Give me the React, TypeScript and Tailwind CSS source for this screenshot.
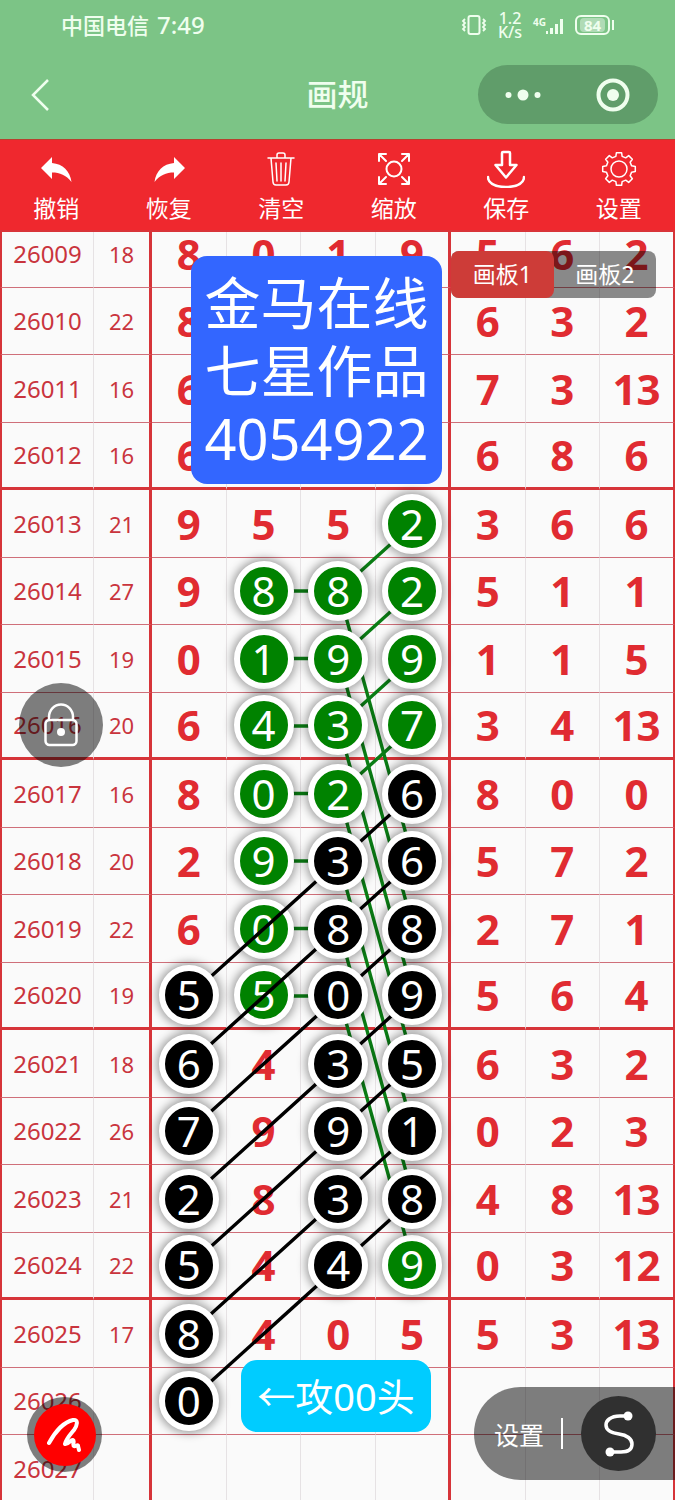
import React, { useState } from 'react';

type Mark = 'green' | 'black';
type Cell = { value: string; mark?: Mark };
type Row = { issue: string; sum: string; cells: Cell[] };
type Point = [col: number, row: number];

// "g" after a digit is a green ball, "b" a black one, "-" an empty cell
const parse = (issue: string, sum: string, line: string): Row => ({
  issue,
  sum,
  cells: line.split(' ').map((item) => {
    const value = item.replace(/[gb-]/g, '');
    if (item.endsWith('g')) return { value, mark: 'green' };
    if (item.endsWith('b')) return { value, mark: 'black' };
    return { value };
  }),
});

const rows: Row[] = [
  parse('26009', '18', '8 0 1 9 5 6 2'),
  parse('26010', '22', '8 - - - 6 3 2'),
  parse('26011', '16', '6 - - - 7 3 13'),
  parse('26012', '16', '6 - - - 6 8 6'),
  parse('26013', '21', '9 5 5 2g 3 6 6'),
  parse('26014', '27', '9 8g 8g 2g 5 1 1'),
  parse('26015', '19', '0 1g 9g 9g 1 1 5'),
  parse('26016', '20', '6 4g 3g 7g 3 4 13'),
  parse('26017', '16', '8 0g 2g 6b 8 0 0'),
  parse('26018', '20', '2 9g 3b 6b 5 7 2'),
  parse('26019', '22', '6 0g 8b 8b 2 7 1'),
  parse('26020', '19', '5b 5g 0b 9b 5 6 4'),
  parse('26021', '18', '6b 4 3b 5b 6 3 2'),
  parse('26022', '26', '7b 9 9b 1b 0 2 3'),
  parse('26023', '21', '2b 8 3b 8b 4 8 13'),
  parse('26024', '22', '5b 4 4b 9g 0 3 12'),
  parse('26025', '17', '8b 4 0 5 5 3 13'),
  parse('26026', '', '0b - - - - - -'),
  parse('26027', '', '- - - - - - -'),
];

const range = (from: number, to: number) => Array.from({ length: to - from + 1 }, (_, i) => from + i);

const greenLines: Point[][] = [
  ...range(5, 11).map((r): Point[] => [[1, r], [2, r]]),
  ...range(4, 7).map((r): Point[] => [[3, r], [2, r + 1]]),
  ...range(5, 11).map((r): Point[] => [[2, r], [3, r + 4]]),
];

const blackLines: Point[][] = range(8, 14).map((r): Point[] => [[3, r], [2, r + 1], [0, r + 3]]);

const toXY = ([col, row]: Point) => `${152 + (523 / 7) * (col + 0.5)},${row * 67.5 + 33.5}`;

const Lines = ({ lines, className }: { lines: Point[][]; className: string }) => (
  <svg
    viewBox="0 0 675 1283"
    preserveAspectRatio="none"
    aria-hidden="true"
    className={`pointer-events-none absolute inset-0 h-full w-full fill-none ${className}`}
  >
    {lines.map((line, i) => (
      <polyline key={i} points={line.map(toXY).join(' ')} strokeWidth="3.4" vectorEffect="non-scaling-stroke" />
    ))}
  </svg>
);

const Ball = ({ value, mark }: { value: string; mark: Mark }) => (
  <span
    className={`relative mx-auto grid size-15 place-items-center rounded-full border-6 border-white text-[42px] leading-none font-normal text-white shadow-[0_0_10px_2px_rgba(0,0,0,0.4)] ${
      mark === 'green' ? 'z-10 bg-[#008200]' : 'z-30 bg-black'
    }`}
  >
    {value}
  </span>
);

const gearPath = () => {
  const points: string[] = [];
  for (let i = 0; i < 8; i++) {
    [[-14, 13], [-9, 16.5], [9, 16.5], [14, 13]].forEach(([deg, r]) => {
      const a = ((i * 45 + deg) * Math.PI) / 180;
      points.push(`${(18 + r * Math.sin(a)).toFixed(2)} ${(18 - r * Math.cos(a)).toFixed(2)}`);
    });
  }
  return `M${points.join('L')}Z`;
};

const tools = [
  {
    label: '撤销',
    icon: <path d="M3 17 14 6v6c11 1 18 8 19.500 19C28 24 22 21.500 14 21.500V28Z" fill="currentColor" stroke="none" />,
  },
  {
    label: '恢复',
    icon: <path d="M34 17 23 6v6C12 13 5 20 3.500 31 9 24 15 21.500 23 21.500V28Z" fill="currentColor" stroke="none" />,
  },
  {
    label: '清空',
    icon: (
      <g strokeWidth="1.500">
        <path d="M5 7h26M14 7V4q0-2 2-2h4q2 0 2 2v3M8 7l2 24q.2 3 3 3h10q2.800 0 3-3l2-24" />
        <path d="m13 12 1 18M18 12v18M23 12l-1 18" />
      </g>
    ),
  },
  {
    label: '缩放',
    icon: (
      <g strokeWidth="2">
        <circle cx="18" cy="18" r="7.500" />
        <path d="M3 10V3h7M3 3l7 7M26 3h7v7M33 3l-7 7M3 26v7h7M3 33l7-7M26 33h7v-7M33 33l-7-7" />
      </g>
    ),
  },
  {
    label: '保存',
    icon: (
      <g strokeWidth="2.500">
        <path d="M15 1h6q1 0 1 1v12h6.500L18 26.500 7.500 14H14V2q0-1 1-1Z" />
        <path d="M0 26c0 5 5 10 18 10s18-5 18-10" />
      </g>
    ),
  },
  {
    label: '设置',
    icon: (
      <g strokeWidth="1.500">
        <path d={gearPath()} />
        <circle cx="18" cy="18" r="8" />
      </g>
    ),
  },
];

const StatusBar = () => (
  <div className="flex h-[50px] items-center justify-between px-[61px] font-medium">
    <div className="flex items-center gap-2 text-[22px]">
      <span>中国电信</span>
      <span className="text-2xl">7:49</span>
    </div>
    <div className="flex items-center gap-[11px]">
      <svg viewBox="0 0 26 22" className="h-[22px] w-[26px] fill-none stroke-current stroke-2" aria-hidden="true">
        <rect x="7.500" y="2" width="11" height="18" rx="2" />
        <path d="m4 5-2 2 2 2-2 2 2 2-2 2 2 2M22 5l2 2-2 2 2 2-2 2 2 2-2 2" strokeWidth="1.800" />
      </svg>
      <span className="flex flex-col items-center text-base leading-[14px]">
        <span>1.2</span>
        <span>K/s</span>
      </span>
      <span className="flex">
        <span className="text-[10px] leading-[14px] font-bold">4G</span>
        <svg viewBox="0 0 18 20" className="h-5 w-[18px] fill-current" aria-hidden="true">
          <path d="M0 16h2v3H0zM4 13h3v6H4zM9 9h3v10H9zM14 4h3v15h-3z" />
        </svg>
      </span>
      <span className="flex items-center gap-[2px]">
        <span className="grid h-5 w-[35px] place-items-center rounded-md border-2 border-current">
          <span className="rounded-sm bg-white/40 px-1 text-[15px] leading-[14px] font-bold">84</span>
        </span>
        <span className="h-[10px] w-[2px] bg-current" />
      </span>
    </div>
  </div>
);

const App: React.FC = () => {
  const [board, setBoard] = useState(0);

  return (
    <div className="flex h-screen flex-col overflow-hidden bg-[#fafafa] font-['Noto_Sans','Noto_Sans_CJK_SC',sans-serif]">
      <header className="shrink-0 bg-[#7cc486] text-[#effeee]">
        <StatusBar />
        <div className="grid h-[89px] grid-cols-[1fr_auto_1fr] items-center px-[17px]">
          <button type="button" aria-label="返回" className="ml-[13px] w-5">
            <svg viewBox="0 0 20 32" className="h-8 w-5 fill-none stroke-current stroke-[2.500]">
              <path d="M18 1 3 16l15 15" />
            </svg>
          </button>
          <h1 className="text-[31px] font-medium">画规</h1>
          <div className="grid h-[59px] w-[180px] grid-cols-2 place-items-center justify-self-end rounded-full bg-[#609d6a]">
            <button type="button" aria-label="更多">
              <svg viewBox="0 0 38 12" className="h-3 w-[38px] fill-current">
                <circle cx="4.500" cy="6" r="3" />
                <circle cx="19" cy="6" r="5.500" />
                <circle cx="33.500" cy="6" r="3" />
              </svg>
            </button>
            <button type="button" aria-label="关闭">
              <svg viewBox="0 0 34 34" className="size-[34px] fill-none stroke-current">
                <circle cx="17" cy="17" r="14.500" strokeWidth="4" />
                <circle cx="17" cy="17" r="6" fill="currentColor" stroke="none" />
              </svg>
            </button>
          </div>
        </div>
      </header>

      <nav className="grid h-[91px] shrink-0 grid-cols-6 border-t border-[#b8402f] bg-[#ef282e] text-white">
        {tools.map((tool) => (
          <button key={tool.label} type="button" className="flex flex-col items-center pt-[10px] text-[23px] leading-8">
            <svg
              viewBox="-1 -1 38 38"
              className="mb-1 size-[38px] fill-none stroke-current"
              strokeLinejoin="round"
              strokeLinecap="round"
              aria-hidden="true"
            >
              {tool.icon}
            </svg>
            {tool.label}
          </button>
        ))}
      </nav>

      <main className="relative min-h-0 flex-1 overflow-hidden border-t-2 border-[#d93439]">
        {/* Trend chart, scrolled a little past the first row */}
        <div className="relative isolate -mt-3">
          <table className="w-full table-fixed border-separate border-spacing-0 text-center">
            <colgroup>
              <col className="w-[94px]" />
              <col className="w-[58px]" />
              <col span={7} />
            </colgroup>
            <tbody>
              {rows.map((row, r) => {
                const line = r % 4 === 3 ? 'border-b-3 border-b-[#d63439]' : 'border-b border-b-[#cf6f79]';
                return (
                  <tr key={row.issue} className="h-[67px] odd:h-[68px]">
                    <th
                      scope="row"
                      className={`border-r border-l-2 border-r-[#e6e2e4] border-l-[#d63439] p-0 text-2xl leading-none font-normal text-[#c9343d] ${line}`}
                    >
                      {row.issue}
                    </th>
                    <td className={`border-r-3 border-r-[#d63439] p-0 text-[22px] leading-none text-[#c9343d] ${line}`}>
                      {row.sum}
                    </td>
                    {row.cells.map((cell, c) => (
                      <td
                        key={c}
                        className={`p-0 text-[42px] leading-none font-bold text-[#e02b31] ${line} ${
                          c === 3
                            ? 'border-r-3 border-r-[#d63439]'
                            : c === 6
                              ? 'border-r-2 border-r-[#d63439]'
                              : 'border-r border-r-[#e6e2e4]'
                        }`}
                      >
                        {cell.mark ? <Ball value={cell.value} mark={cell.mark} /> : cell.value}
                      </td>
                    ))}
                  </tr>
                );
              })}
            </tbody>
          </table>
          <Lines lines={greenLines} className="z-0 stroke-[#0a7d14]" />
          <Lines lines={blackLines} className="z-20 stroke-black" />
        </div>

        {/* Stickers dropped on the canvas */}
        <div className="absolute top-6 left-[191px] w-[251px] rounded-2xl bg-[#3366ff] py-3 text-center text-[56px] leading-[68px] text-white">
          金马在线
          <br />
          七星作品
          <br />
          4054922
        </div>
        <div className="absolute top-[1128px] left-[241px] grid h-[72px] w-[190px] place-items-center rounded-2xl bg-[#00ccff] text-[38px] leading-none text-white">
          ←攻00头
        </div>

        <div className="absolute top-[19px] right-[19px] grid h-[47px] w-[205px] grid-cols-2 rounded-lg bg-black/45 text-[23px] text-white">
          {['画板1', '画板2'].map((name, i) => (
            <button
              key={name}
              type="button"
              onClick={() => setBoard(i)}
              className={`rounded-lg ${board === i ? 'bg-[#cd3c38]' : ''}`}
            >
              {name}
            </button>
          ))}
        </div>

        <button
          type="button"
          aria-label="锁定"
          className="absolute top-[451px] left-[19px] grid size-[84px] place-items-center rounded-full bg-black/50 text-white"
        >
          <svg viewBox="0 0 34 44" className="h-11 w-[34px] fill-none stroke-current stroke-[2.500]">
            <rect x="1.500" y="17" width="31" height="25" rx="4" />
            <path d="M5 17v-3a12 12.500 0 0 1 24 0v3" />
            <circle cx="17" cy="29" r="4" fill="currentColor" stroke="none" />
          </svg>
        </button>

        <button
          type="button"
          aria-label="画笔"
          className="absolute bottom-7 left-[27px] grid size-[75px] place-items-center rounded-full bg-black/50"
        >
          <span className="grid size-[62px] place-items-center rounded-full bg-[#ff0000] text-white">
            <svg
              viewBox="0 0 36 36"
              className="size-9 fill-none stroke-current stroke-4"
              strokeLinecap="round"
              strokeLinejoin="round"
            >
              <path d="M2 26C8 15 17 5 26 3c6-1 4 6 1 10-4 5-8 9-9 14 3 1 6-5 8-4s-1 5 1 6c1 1 4-2 4 0l1 4" />
            </svg>
          </span>
        </button>

        <div className="absolute right-0 bottom-5 flex h-[93px] w-[201px] items-center rounded-l-full bg-black/50 pl-5 text-white">
          <button type="button" className="pt-1 text-[25px]">
            设置
          </button>
          <span className="ml-[17px] h-[31px] w-[2px] bg-white" />
          <button
            type="button"
            aria-label="曲线"
            className="ml-[18px] grid size-[75px] place-items-center rounded-full bg-[#303030]"
          >
            <svg viewBox="0 0 30 46" className="h-[46px] w-[30px] fill-none stroke-current stroke-[3.500]">
              <path d="M24 5h-8C6 5 2 10 2 14c0 6 6 8 13 9 8 1 13 5 13 10 0 6-5 8-11 8H6" />
              <circle cx="24" cy="5" r="4.500" fill="currentColor" stroke="none" />
              <circle cx="6" cy="41" r="4.500" fill="currentColor" stroke="none" />
            </svg>
          </button>
        </div>
      </main>
    </div>
  );
};

export default App;
